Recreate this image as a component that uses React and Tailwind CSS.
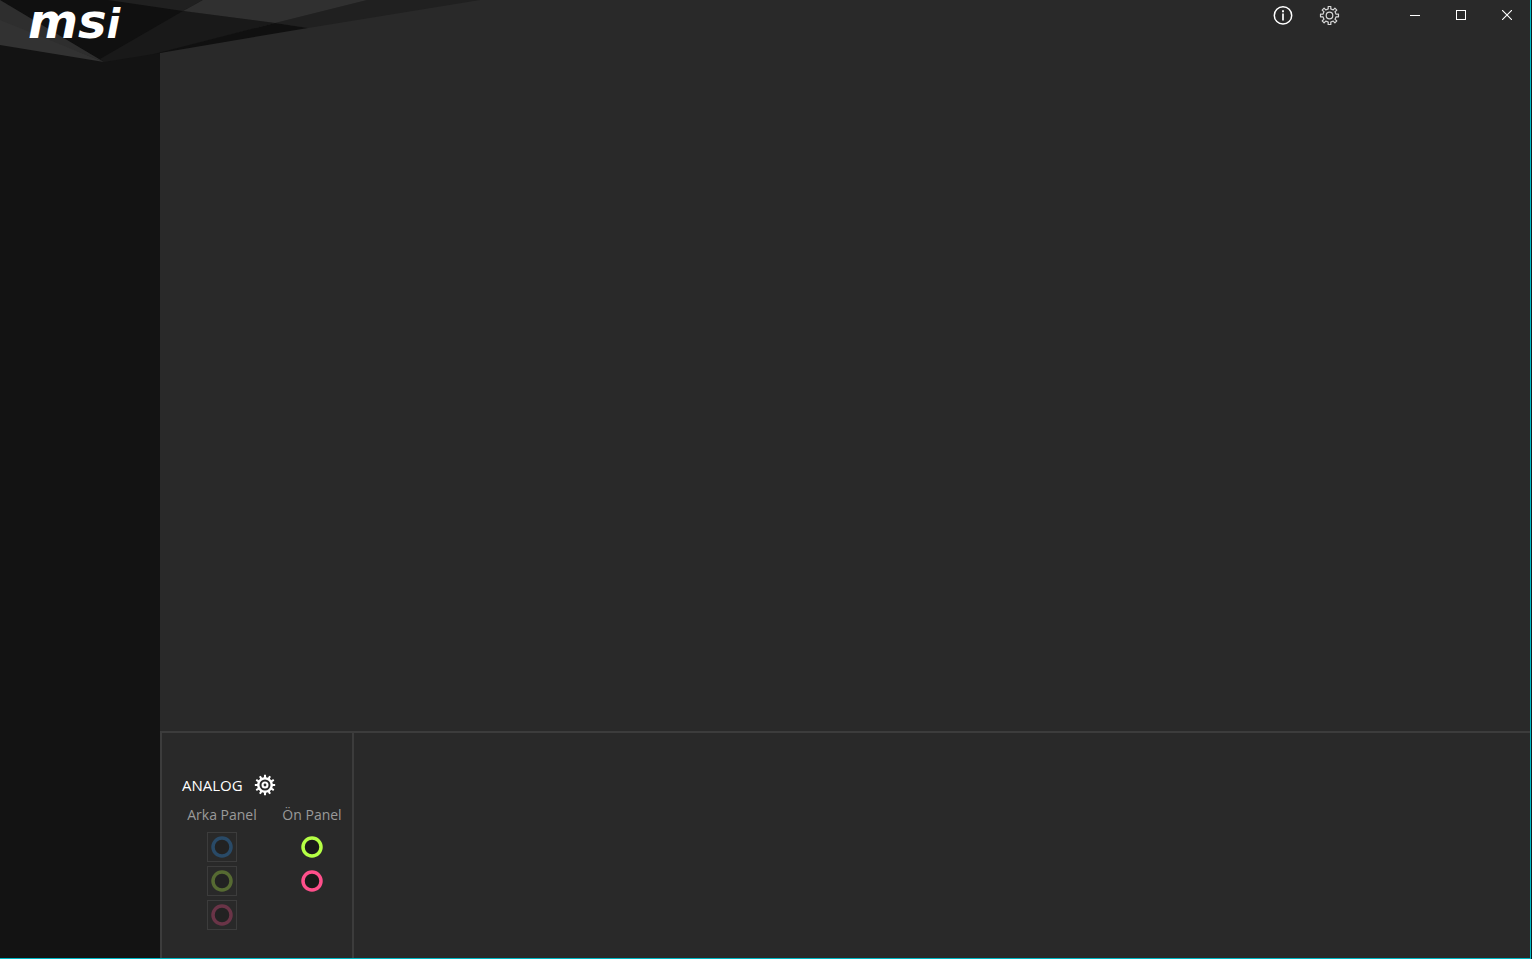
const REAR_JACKS = [
  { label: "Line in", color: "#294a67", fill: "#222222" },
  { label: "Line out", color: "#566a32", fill: "#222222" },
  { label: "Microphone", color: "#6a3447", fill: "#222222" },
]

const FRONT_JACKS = [
  { label: "Headphones", color: "#b5ff45", fill: "#191919" },
  { label: "Microphone", color: "#ff4f8b", fill: "#191919" },
]

// Closed outline of a cog centred on 12,12
function gearPath(teeth, outer, inner, topShare, baseShare) {
  const step = (Math.PI * 2) / teeth
  const points = []
  for (let i = 0; i < teeth; i++) {
    const mid = i * step - Math.PI / 2
    const corners = [
      [inner, -baseShare],
      [outer, -topShare],
      [outer, topShare],
      [inner, baseShare],
    ]
    corners.forEach(([r, share]) => {
      const a = mid + share * step
      points.push(`${(12 + r * Math.cos(a)).toFixed(2)} ${(12 + r * Math.sin(a)).toFixed(2)}`)
    })
  }
  return `M${points.join("L")}Z`
}

const THIN_GEAR = gearPath(8, 9.1, 6.7, 0.19, 0.24)
const BOLD_GEAR = gearPath(12, 10.2, 7.9, 0.19, 0.26)

function HeaderArt() {
  return (
    <svg
      className="pointer-events-none absolute left-0 top-0"
      width="480"
      height="64"
      viewBox="0 0 480 64"
      aria-hidden="true"
    >
      <polygon points="0,0 203,0 104,62" fill="#101010" />
      <polygon points="108,0 203,0 183,11" fill="#202020" />
      <polygon points="203,0 367,0 275,23 183,11" fill="#303030" />
      <polygon points="367,0 480,0 308,28 275,23" fill="#202020" />
      <polygon points="183,11 275,23 160,53 104,62 100,59" fill="#191919" />
      <polygon points="275,23 308,28 160,53 150,55" fill="#101010" />
      <polygon points="0,0 104,62 0,22" fill="#2e2e2e" />
      <polygon points="0,20 104,62 0,45" fill="#323232" />
    </svg>
  )
}

function Jack({ jack, framed }) {
  return (
    <button
      type="button"
      aria-label={jack.label}
      className={`flex size-[30px] items-center justify-center ${framed ? "border border-[#3c3c3c]" : ""}`}
    >
      <svg width="22" height="22" viewBox="0 0 22 22">
        <circle cx="11" cy="11" r="9" fill={jack.fill} stroke={jack.color} strokeWidth="3.5" />
      </svg>
    </button>
  )
}

function JackColumn({ title, jacks, framed }) {
  return (
    <div className="flex flex-col items-center">
      <h3 className="mb-[7px] whitespace-nowrap text-[14px] leading-5 text-[#9a9a9a]">{title}</h3>
      <div className="flex flex-col gap-1">
        {jacks.map((jack) => (
          <Jack key={jack.label} jack={jack} framed={framed} />
        ))}
      </div>
    </div>
  )
}

function TitleBar() {
  return (
    <header className="flex h-[30px] justify-end text-white">
      <div className="mr-10 flex">
        <button type="button" aria-label="Info" className="flex w-[46px] items-center justify-center">
          <svg width="24" height="24" viewBox="0 0 24 24" fill="none" stroke="currentColor">
            <circle cx="12" cy="12.4" r="8.7" strokeWidth="1.5" />
            <path d="M12 10.5V17.4" strokeWidth="1.7" />
            <path d="M12 7.2V9.2" strokeWidth="1.9" />
          </svg>
        </button>
        <button type="button" aria-label="Settings" className="flex w-[46px] items-center justify-center">
          <svg width="24" height="24" viewBox="-0.5 -0.5 24 24" fill="none" stroke="#d8d8d8" strokeLinejoin="round">
            <path d={THIN_GEAR} strokeWidth="1.2" />
            <circle cx="12" cy="12" r="3.3" strokeWidth="1.2" />
          </svg>
        </button>
      </div>
      <button type="button" aria-label="Minimize" className="flex w-[46px] items-center justify-center">
        <svg width="10" height="10" viewBox="0 0 10 10" shapeRendering="crispEdges">
          <path d="M0 5.5H10" stroke="currentColor" />
        </svg>
      </button>
      <button type="button" aria-label="Maximize" className="flex w-[46px] items-center justify-center">
        <svg width="10" height="10" viewBox="0 0 10 10" fill="none" shapeRendering="crispEdges">
          <rect x="0.5" y="0.5" width="9" height="9" stroke="currentColor" />
        </svg>
      </button>
      <button type="button" aria-label="Close" className="flex w-[46px] items-center justify-center">
        <svg width="10" height="10" viewBox="0 0 10 10" fill="none">
          <path d="M0 0L10 10M10 0L0 10" stroke="currentColor" strokeWidth="1.1" />
        </svg>
      </button>
    </header>
  )
}

export default function App() {
  return (
    <div className="flex min-h-screen bg-[#101c20] pr-px font-['Open_Sans',sans-serif]">
      <div className="relative flex flex-1 border-b border-r border-[#00b7c3] bg-[#292929]">
        <aside className="w-40 shrink-0 bg-[#131313]">
          <HeaderArt />
          <h1 className="relative flex items-baseline pl-7 font-['DejaVu_Sans',sans-serif] text-[48px] font-bold italic leading-[42px] text-white">
            ms<span className="text-[40px]">i</span>
          </h1>
        </aside>

        <div className="flex flex-1 flex-col">
          <TitleBar />
          <main className="flex-1" />

          <section className="flex h-[227px] border-l-2 border-t-2 border-[#3c3c3c]">
            <div className="w-[192px] border-r-2 border-[#3c3c3c] pt-[42px]">
              <div className="flex h-5 items-center gap-[10px] pl-5">
                <h2 className="text-[15px] leading-5 text-white">ANALOG</h2>
                <button type="button" aria-label="Analog settings">
                  <svg width="24" height="24" viewBox="0 0 24 24">
                    <path d={BOLD_GEAR} fill="#ffffff" />
                    <circle cx="12" cy="12" r="4.5" fill="none" stroke="#292929" strokeWidth="2" />
                    <circle cx="12" cy="12" r="1.4" fill="#292929" />
                  </svg>
                </button>
              </div>
              <div className="mt-[10px] grid grid-cols-[80px_100px] pl-5">
                <JackColumn title="Arka Panel" jacks={REAR_JACKS} framed />
                <JackColumn title="Ön Panel" jacks={FRONT_JACKS} />
              </div>
            </div>
          </section>
        </div>
      </div>
    </div>
  )
}
